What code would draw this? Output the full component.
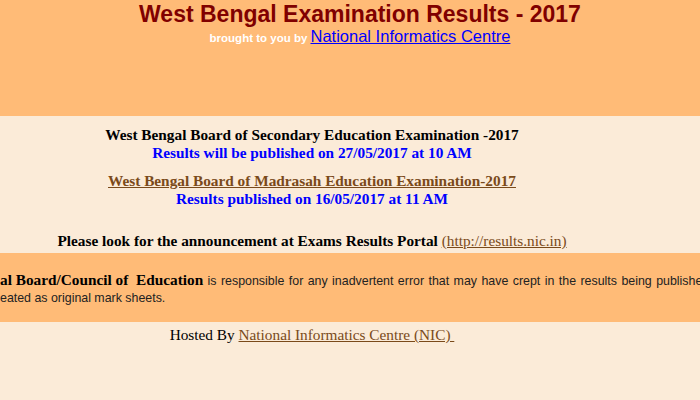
export default function App() {
  const times = { fontFamily: '"Liberation Serif", "Times New Roman", serif' };
  const arial = { fontFamily: '"Liberation Sans", Arial, sans-serif' };

  return (
    <div className="h-[400px] w-[700px] overflow-hidden bg-[#fbebd8]">
      {/* header */}
      <div className="h-[116px] bg-[#ffbb77] pl-[20px] text-center" style={arial}>
        <h1 className="pt-[1px] text-[23px] font-bold leading-[27px] text-[#800000]">
          West Bengal Examination Results - 2017
        </h1>
        <div className="leading-[17px]">
          <span className="text-[11.5px] font-bold text-white">brought to you by </span>
          <a href="#" className="text-[16.5px] text-[#0000ff] underline">
            National Informatics Centre
          </a>
        </div>
      </div>

      {/* notices */}
      <div className="h-[137px] pr-[76px] pt-[10px] text-center text-[15.3px] font-bold" style={times}>
        <p className="leading-[18px] text-black">
          West Bengal Board of Secondary Education Examination -2017
        </p>
        <p className="leading-[18px] text-[#0000ff]">
          Results will be published on 27/05/2017 at 10 AM
        </p>
        <p className="mt-[10px] leading-[18px]">
          <a href="#" className="text-[#7a4a1a] underline">
            West Bengal Board of Madrasah Education Examination-2017
          </a>
        </p>
        <p className="leading-[18px] text-[#0000ff]">Results published on 16/05/2017 at 11 AM</p>
        <p className="mt-[24px] leading-[18px] text-black">
          Please look for the announcement at Exams Results Portal{" "}
          <a href="#" className="font-normal text-[#7a4a1a] underline">
            (http://results.nic.in)
          </a>
        </p>
      </div>

      {/* disclaimer */}
      <div className="h-[69px] overflow-hidden bg-[#ffbb77] pt-[18px] text-[12.4px] text-[#222]" style={arial}>
        <p className="overflow-hidden whitespace-nowrap leading-[17px] [word-spacing:1px]">
          <span className="text-[15.3px] font-bold text-black [word-spacing:0px]" style={times}>
            al Board/Council of&nbsp; Education
          </span>{" "}
          is responsible for any inadvertent error that may have crept in the results being publishe
        </p>
        <p className="whitespace-nowrap leading-[17px]">eated as original mark sheets.</p>
      </div>

      {/* footer */}
      <div className="pr-[76px] pt-[3px] text-center text-[15.3px] leading-[20px] text-black" style={times}>
        Hosted By{" "}
        <a href="#" className="text-[#7a4a1a] underline">
          National Informatics Centre (NIC)&nbsp;
        </a>
      </div>
    </div>
  );
}
